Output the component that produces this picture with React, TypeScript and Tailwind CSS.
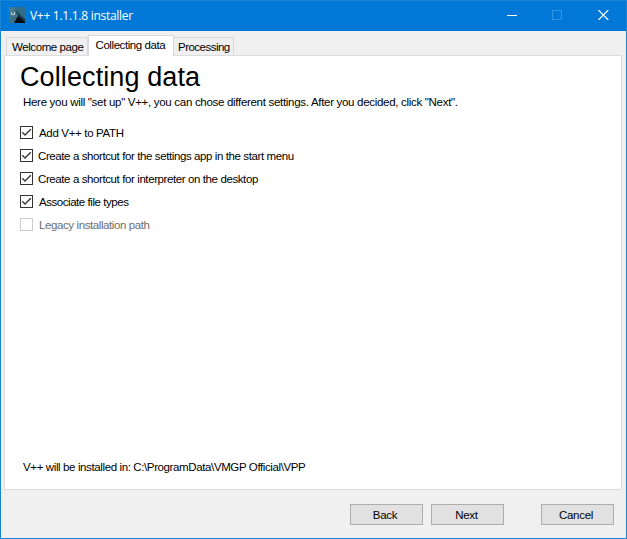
const options = [
  { label: "Add V++ to PATH", checked: true, text: "pl-[6px] tracking-[-0.33px]" },
  { label: "Create a shortcut for the settings app in the start menu", checked: true, text: "pl-[5px] tracking-[-0.4px]" },
  { label: "Create a shortcut for interpreter on the desktop", checked: true, text: "pl-[5px] tracking-[-0.4px]" },
  { label: "Associate file types", checked: true, text: "pl-[6px] tracking-[-0.45px]" },
  { label: "Legacy installation path", checked: false, text: "pl-[6px] tracking-[-0.4px] text-[#6d6d6d]" },
];

function AppIcon() {
  return (
    <svg width="16" height="16" viewBox="0 0 16 16" className="mb-[2px] shrink-0">
      <rect width="16" height="16" rx="0.5" fill="#2f6d88" />
      <path d="M0 0H5L9 8L4 16H0Z" fill="#46788e" />
      <path d="M6 3L16 12V16L9 9Z" fill="#1c3a4b" />
      <path d="M0 9L8 8L5 16H0Z" fill="#3d6f86" />
      <path d="M9 9L16 15V16H5Z" fill="#050c12" />
      <path d="M2.5 5V7.5H5.5V5" fill="none" stroke="#bfd1da" strokeWidth="1" />
    </svg>
  );
}

function Checkbox({ checked }: { checked: boolean }) {
  return (
    <svg width="13" height="13" viewBox="0 0 13 13" className="shrink-0">
      <rect x="0.5" y="0.5" width="12" height="12" fill="#fff" stroke={checked ? "#333" : "#ccc"} />
      {checked && <path d="M2.3 6.3L5 9L10.8 3.2" fill="none" stroke="#333" strokeWidth="1.3" />}
    </svg>
  );
}

function PushButton({ label, className }: { label: string; className: string }) {
  return (
    <button className={`h-[21px] w-[73px] border border-[#adadad] bg-[#e1e1e1] text-center leading-[20px] tracking-[-0.3px] ${className}`}>
      {label}
    </button>
  );
}

export default function App() {
  return (
    <div className="flex h-[539px] w-[627px] flex-col overflow-hidden border border-[#1883d7] bg-[#f0f0f0] font-['Liberation_Sans',Arial,sans-serif] text-[11.5px] whitespace-nowrap text-black">
      <header className="flex h-[30px] shrink-0 items-center bg-[#0078d7] pl-2 text-white">
        <AppIcon />
        <span className="pl-[5px] font-['Open_Sans','Noto_Sans',sans-serif] text-[12px] leading-[30px] tracking-[-0.28px]">V++ 1.1.1.8 installer</span>
        <div className="mb-[2px] ml-auto flex h-[10px] gap-[35px] pr-[17px]">
          <svg width="10" height="10"><path d="M0 5.5H10" stroke="#fff" /></svg>
          <svg width="10" height="10"><rect x="0.5" y="0.5" width="9" height="9" fill="none" stroke="#3393df" /></svg>
          <svg width="11" height="10" className="ml-px"><path d="M0.3 0L10.3 10M10.3 0L0.3 10" stroke="#fff" strokeWidth="1.2" /></svg>
        </div>
      </header>
      <main className="flex flex-1 flex-col pr-[4px] pl-[3px]">
        <nav className="z-10 -mb-px flex h-[25px] shrink-0 items-end pt-1 pl-[2px]">
          <div className="mb-px h-[18px] w-[82px] border border-b-0 border-[#d9d9d9] pl-[5px] leading-[19px] tracking-[-0.42px]">Welcome page</div>
          <div className="h-[21px] w-[86px] border border-b-0 border-[#d9d9d9] bg-white pl-[6.5px] leading-[19px] tracking-[-0.42px]">Collecting data</div>
          <div className="mb-px h-[18px] w-[60px] border border-b-0 border-l-0 border-[#d9d9d9] pl-[4px] leading-[19px] tracking-[-0.52px]">Processing</div>
        </nav>
        <section className="flex h-[435px] shrink-0 flex-col border border-[#dcdcdc] bg-white pl-[15px]">
          <h1 className="mt-[5px] h-[32px] text-[27px] leading-[32px] tracking-[0.1px]">Collecting data</h1>
          <p className="mt-[2px] h-[14px] pl-[3px] leading-[14px] tracking-[-0.3px]">Here you will "set up" V++, you can chose different settings. After you decided, click "Next".</p>
          <div className="mt-[12px] flex flex-col">
            {options.map((option) => (
              <label key={option.label} className="flex h-[23px] items-center">
                <Checkbox checked={option.checked} />
                <span className={`pt-px leading-[14px] ${option.text}`}>{option.label}</span>
              </label>
            ))}
          </div>
          <p className="mt-auto mb-[15px] h-[14px] pl-[3px] leading-[14px] tracking-[-0.38px]">V++ will be installed in: C:\ProgramData\VMGP Official\VPP</p>
        </section>
        <footer className="flex justify-end pt-[14px] pr-[8px]">
          <PushButton label="Back" className="mr-2 pr-[3px]" />
          <PushButton label="Next" className="mr-[37px] pr-[2px]" />
          <PushButton label="Cancel" className="pr-[3px]" />
        </footer>
      </main>
    </div>
  );
}
